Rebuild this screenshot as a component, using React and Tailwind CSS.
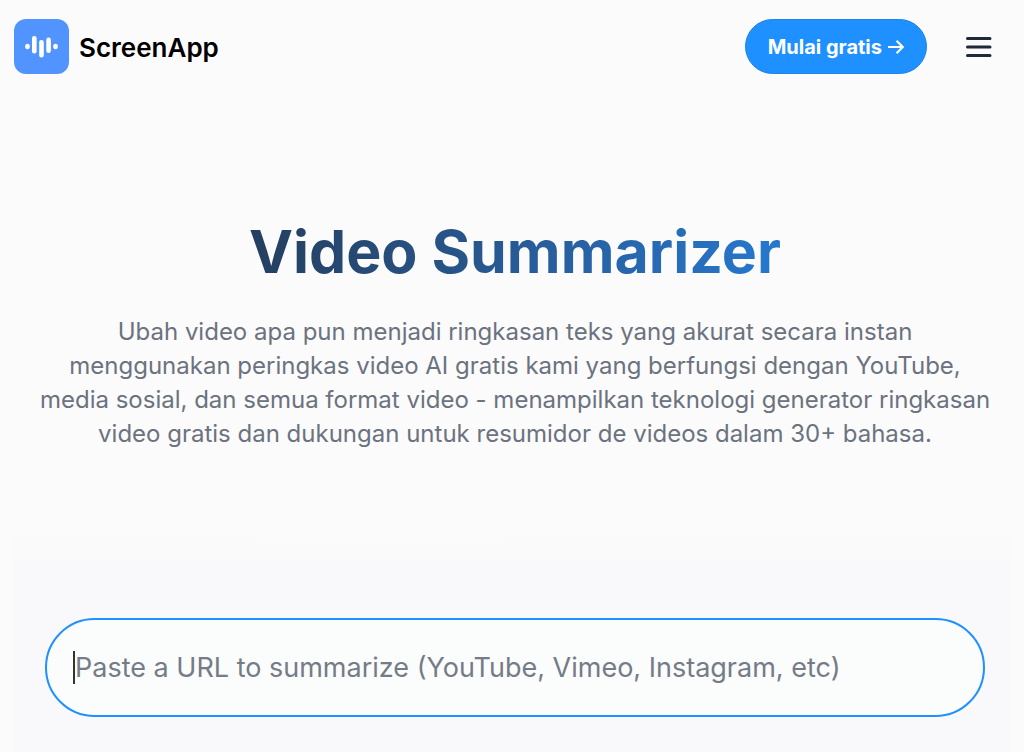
function LogoMark() {
  return (
    <svg className="size-[55px] shrink-0" viewBox="0 0 55 55" aria-hidden="true">
      <rect width="55" height="55" rx="12" fill="#5294ff" />
      <g fill="#fff">
        <ellipse cx="13.5" cy="27.5" rx="2.3" ry="2.7" />
        <rect x="18" y="17" width="4.6" height="17.5" rx="2.3" />
        <rect x="25.2" y="21" width="4.6" height="17.5" rx="2.3" />
        <rect x="32.3" y="18.5" width="4.6" height="15.5" rx="2.3" />
        <ellipse cx="41.5" cy="27.5" rx="2.3" ry="2.7" />
      </g>
    </svg>
  );
}

function ArrowRight() {
  return (
    <svg className="h-4 w-4" viewBox="0 0 16 16" fill="none" stroke="currentColor" strokeWidth="2.2" aria-hidden="true">
      <path d="M0 8H14.5M8.6 1.8L14.6 8L8.6 14.2" />
    </svg>
  );
}

function Header() {
  return (
    <header className="flex items-center justify-between pt-[19px] pr-[31px] pl-3.5">
      <a href="#" className="flex items-center gap-2.5 text-[26px] font-semibold text-black">
        <LogoMark />
        <span className="pt-0.5">ScreenApp</span>
      </a>
      <div className="flex items-center gap-9">
        <a
          href="#"
          className="flex h-[55px] items-center gap-1.5 rounded-full border border-[#1a84ec] bg-[#1e90ff] px-[22px] text-[20px] font-bold text-white"
        >
          Mulai gratis
          <ArrowRight />
        </a>
        <button type="button" aria-label="Menu" className="text-[#1f2937]">
          <svg className="h-[30px] w-[30px]" viewBox="0 0 30 30" fill="none" stroke="currentColor" strokeWidth="3" strokeLinecap="round" aria-hidden="true">
            <path d="M4.5 6.5H27M4.5 15H27M4.5 23.5H27" />
          </svg>
        </button>
      </div>
    </header>
  );
}

export default function App() {
  return (
    <div className="min-h-screen bg-[#fbfbfb] font-['Inter','Liberation_Sans',sans-serif]">
      <Header />
      <main className="pt-[140px]">
        <section className="pr-8 pl-[38px] text-center">
          <h1 className="bg-linear-to-r from-[#1f2937] to-[#1e90ff] bg-clip-text text-[59px] leading-[76px] font-bold text-transparent">
            Video Summarizer
          </h1>
          <p className="mt-[25px] text-[24px] leading-[34px] text-[#6b7280]">
            Ubah video apa pun menjadi ringkasan teks yang akurat secara instan menggunakan peringkas video AI gratis
            kami yang berfungsi dengan YouTube, media sosial, dan semua format video - menampilkan teknologi generator
            ringkasan video gratis dan dukungan untuk resumidor de videos dalam 30+ bahasa.
          </p>
        </section>
        <section className="mx-3.5 mt-[75px] bg-linear-to-b from-[#fbfbfb] to-[#f9f9fb] to-20% pt-[92px] pr-[25px] pb-9 pl-[31px]">
          <form className="relative">
            <input
              id="video-url"
              type="url"
              aria-label="Video URL"
              placeholder="Paste a URL to summarize (YouTube, Vimeo, Instagram, etc)"
              className="block h-[99px] w-full rounded-full border-2 border-[#1e90ff] bg-[#fafdfc] px-7 text-[27px] text-[#1f2937] caret-transparent outline-none placeholder:text-[#757b87]"
            />
            <span className="absolute top-[33px] left-7 h-[33px] w-0.5 bg-[#333333]" aria-hidden="true" />
          </form>
        </section>
      </main>
    </div>
  );
}
